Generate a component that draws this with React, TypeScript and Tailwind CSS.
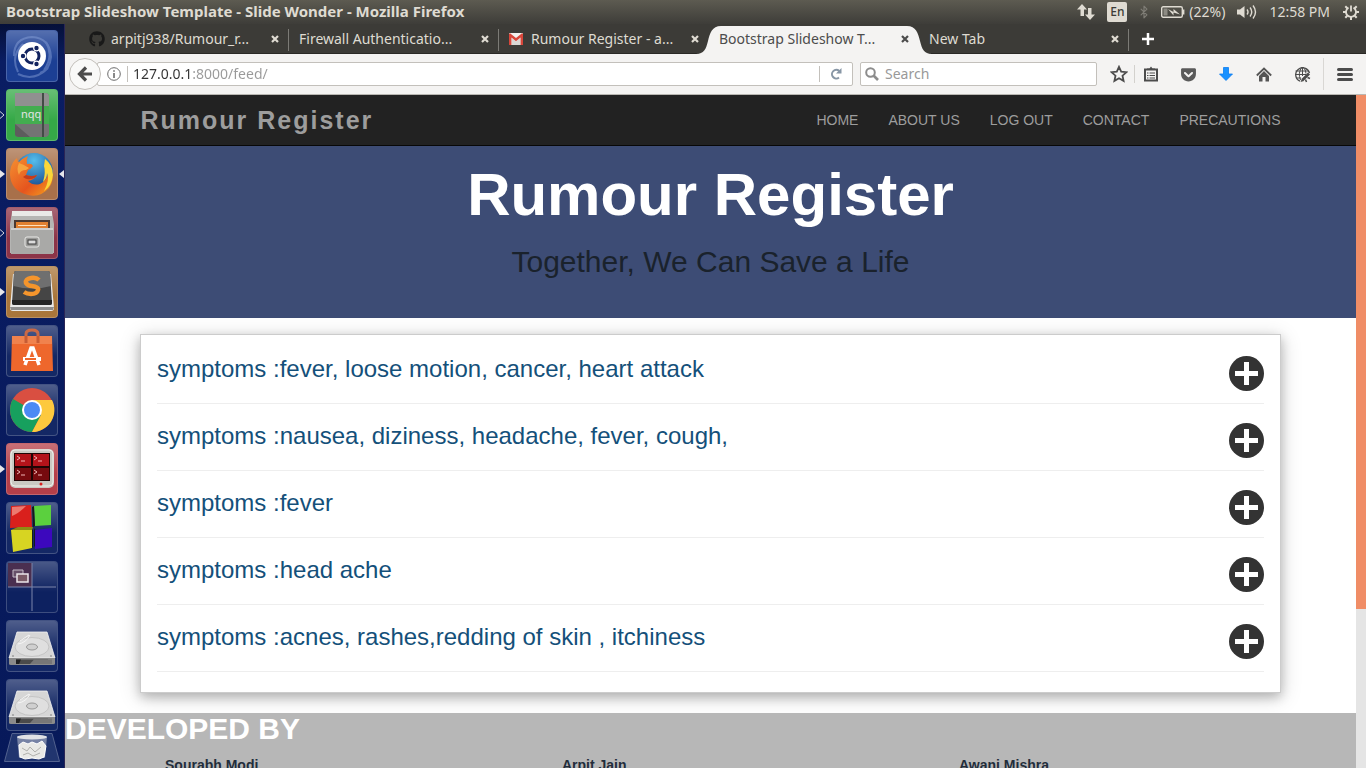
import type { ReactNode } from "react";
import { Bluetooth } from "lucide-react";
import { FaGetPocket, FaGithub } from "react-icons/fa";

const NAV_LINKS = ["Home", "About us", "Log out", "Contact", "Precautions"];

const SYMPTOMS = [
  "fever, loose motion, cancer, heart attack",
  "nausea, diziness, headache, fever, cough,",
  "fever",
  "head ache",
  "acnes, rashes,redding of skin , itchiness",
];

const DEVELOPERS = ["Sourabh Modi", "Arpit Jain", "Awani Mishra"];

// share of the page that fits in the viewport
const VISIBLE_SHARE = 673 / 881;

const GmailIcon = () => (
  <svg viewBox="0 0 14 12" className="mr-0.5 h-3 w-3.5 shrink-0">
    <rect width="14" height="12" rx="1" fill="#f2f0ee" />
    <path d="M2.5 12V5L7 8.5 11.5 5v7z" fill="#d9d7d4" />
    <path d="M0 12V1l1-.8L7 5l6-4.8 1 .8v11h-2.4V4.6L7 8.2 2.4 4.600V12z" fill="#d9463a" />
  </svg>
);

const CloseIcon = () => (
  <svg viewBox="0 0 8 8" className="size-2">
    <path d="M1 1l6 6M7 1L1 7" stroke="currentColor" strokeWidth="2.2" fill="none" />
  </svg>
);

type TabInfo = { title: string; icon?: ReactNode; active?: boolean; divider?: boolean };

const TABS: TabInfo[] = [
  {
    title: "arpitj938/Rumour_r...",
    icon: <FaGithub className="size-4 shrink-0 text-[#191919]" />,
    divider: true,
  },
  { title: "Firewall Authenticatio...", divider: true },
  { title: "Rumour Register - a...", icon: <GmailIcon /> },
  { title: "Bootstrap Slideshow T...", active: true },
  { title: "New Tab", divider: true },
];

function Tab({ title, icon, active, divider }: TabInfo) {
  return (
    <div
      className={
        active
          ? "relative z-10 flex h-full w-[210px] items-center gap-1.5 px-2.5 text-[#4c4c4c]"
          : "relative flex h-full w-[210px] items-center gap-1.5 px-2.5 text-[#dfdbd2]"
      }
    >
      {active && (
        <svg viewBox="0 0 236 28" className="absolute -left-[13px] top-0.5 -z-10 h-7 w-[236px]">
          <path
            d="M0 28C8 28 10 23 12 15S16 0 25 0H211C220 0 222 7 224 15S228 28 236 28z"
            fill="#f4f3f2"
          />
        </svg>
      )}
      {icon}
      <button className="flex-1 overflow-hidden text-left whitespace-nowrap">{title}</button>
      <button aria-label="Close tab">
        <CloseIcon />
      </button>
      {divider && <span className="absolute right-0 top-[5px] h-[22px] w-px bg-[#7c7b76]" />}
    </div>
  );
}

function TitleBar() {
  return (
    <header className="flex h-6 shrink-0 items-center justify-between bg-linear-to-b from-[#5d5b51] to-[#3e3d39] px-1.5 text-sm text-[#dfdbd2]">
      <h1 className="text-[15px] font-bold">
        Bootstrap Slideshow Template - Slide Wonder - Mozilla Firefox
      </h1>
      <div className="flex items-center">
        <svg viewBox="0 0 18 16" className="mr-3 h-4 w-[18px]" fill="currentColor">
          <path d="M5 0l5 5.500H7V12H3.500V5.500H0zM13 16l-5-5.500h3V4h3.500v6.500H18z" />
        </svg>
        <span className="mr-2.5 flex size-5 items-center justify-center rounded-xs bg-[#dfdbd2] text-xs font-medium text-[#3c3b37]">
          En
        </span>
        <Bluetooth className="mr-2.5 h-4 w-3.5 text-[#7f7d76]" />
        <svg viewBox="0 0 24 12" className="mr-1 h-3 w-6" fill="none" stroke="currentColor">
          <rect x=".7" y=".7" width="20.600" height="10.600" rx="1.500" strokeWidth="1.400" />
          <path d="M22.500 3.500v5" strokeWidth="1.800" />
          <rect x="2.500" y="2.500" width="4" height="7" fill="#8d8b83" stroke="none" />
          <path d="M7 3l5.500 3V3l6.500 5.500-6.500-2V9.500z" fill="currentColor" stroke="none" />
        </svg>
        <span className="mr-3">(22%)</span>
        <svg viewBox="0 0 20 16" className="mr-3 h-4 w-5" fill="none" stroke="currentColor">
          <path d="M0 5.500h3L7.500 2v12L3 10.500H0z" fill="currentColor" stroke="none" />
          <path d="M10 5.500q2 2.500 0 5M13 3.500q3.500 4.500 0 9M16 1.500q5 6.500 0 13" strokeWidth="1.400" />
        </svg>
        <span className="mr-3">12:58 PM</span>
        <svg viewBox="0 0 18 18" className="size-[18px]" fill="none" stroke="currentColor">
          <path d="M6.500 4.600a5 5 0 1 0 5 0M9 2.500v6" strokeWidth="1.800" />
          <path
            d="M9 14v3M1 9h3M14 9h3M3.300 3.300l2 2M14.700 3.300l-2 2M3.300 14.700l2-2M14.700 14.700l-2-2"
            strokeWidth="2"
          />
        </svg>
      </div>
    </header>
  );
}

function Tile({
  label,
  color,
  marker,
  active,
  children,
}: {
  label: string;
  color: string;
  marker?: "solid" | "hollow";
  active?: boolean;
  children: ReactNode;
}) {
  return (
    <li className="relative px-1.5">
      {marker && (
        <svg viewBox="0 0 5 8" className="absolute left-0 top-[22px] h-2 w-[5px]">
          {marker === "solid" ? (
            <path d="M0 0l5 4-5 4z" fill="#e6e6ea" />
          ) : (
            <path d="M0 .5L4 4 0 7.500" fill="none" stroke="#d6d6de" />
          )}
        </svg>
      )}
      <button
        aria-label={label}
        className={`block size-[52px] rounded-[4px] border border-white/20 ${color}`}
      >
        <span className="block size-full rounded-[3px] bg-linear-to-b from-white/25 to-transparent to-60%">
          <svg viewBox="1 1 50 50" className="size-full">
            {children}
          </svg>
        </span>
      </button>
      {active && (
        <svg viewBox="0 0 5 8" className="absolute right-0 top-[22px] h-2 w-[5px]">
          <path d="M5 0L0 4l5 4z" fill="#e6e6ea" />
        </svg>
      )}
    </li>
  );
}

const Drive = () => (
  <>
    <path d="M11 12H41L49 38H3z" fill="#d6d6d6" stroke="#f3f3f3" strokeWidth=".8" />
    <path d="M3 38H49V44Q49 45 47 45H5Q3 45 3 44z" fill="#8b8b8b" />
    <path d="M10 39.500H42V44H10z" fill="#4b4b4b" />
    <path d="M10 39.500h5L13 44h-3z" fill="#1f1f1f" />
    <path d="M28 39.500H46V44H24z" fill="#777" />
    <ellipse cx="26" cy="27" rx="17" ry="9.500" fill="#dfdfdf" stroke="#c4c4c4" />
    <path d="M12 24Q20 23 24 15M14 21l9-6" stroke="#f5f5f5" fill="none" />
    <ellipse cx="26" cy="27" rx="5.500" ry="3" fill="#cfcfcf" stroke="#999" />
    <circle cx="7" cy="36" r=".8" fill="#777" />
    <circle cx="45" cy="36" r=".8" fill="#777" />
  </>
);

function Launcher() {
  return (
    <nav
      aria-label="Launcher"
      className="w-[65px] shrink-0 overflow-hidden border-r border-[#2a2556] bg-linear-to-b from-[#051039] via-[#0a1d63] via-5% to-[#07195a] pt-1.5"
    >
      <ul className="flex flex-col gap-[7px]">
        <Tile label="Dash" color="bg-[#1c3f94]">
          <g fill="none" stroke="#8ea6dc" strokeWidth="2" opacity=".45">
            <path d="M8 26Q8 8 26 7Q44 8 45 27Q44 40 34 43" />
            <path d="M12 42Q4 26 17 14M40 12Q48 26 38 40M12 44Q28 52 42 38" />
          </g>
          <circle cx="26" cy="26" r="14" fill="#fff" />
          <circle cx="26" cy="26" r="7" fill="none" stroke="#12235f" strokeWidth="3" />
          <g stroke="#fff" strokeWidth="1.200" fill="#12235f">
            <circle cx="17" cy="26" r="2.800" />
            <circle cx="30.500" cy="18" r="2.800" />
            <circle cx="30.500" cy="34" r="2.800" />
          </g>
        </Tile>
        <Tile label="nqq" color="bg-[#35a947]" marker="hollow">
          <rect x="9" y="4" width="34" height="44" rx="4" fill="#747474" />
          <path d="M9 4H39Q43 4 43 8V17H9z" fill="#909090" />
          <path d="M9 17H43V35H9z" fill="#43ad50" />
          <path d="M9 35L24 48H13Q9 48 9 45z" fill="#5d5d5d" />
          <path d="M36 4h2v44h-2z" fill="#424b45" />
          <text x="15" y="29" fontSize="11" fontFamily="Noto Sans, sans-serif" fill="#e5e5e5">
            nqq
          </text>
        </Tile>
        <Tile label="Firefox" color="bg-[#a8704a]" marker="solid" active>
          <defs>
            <radialGradient id="globe" cx="50%" cy="20%" r="80%">
              <stop offset="0" stopColor="#55bdec" />
              <stop offset="1" stopColor="#123f86" />
            </radialGradient>
            <linearGradient id="fox" x1="0" y1="0" x2="1" y2="1">
              <stop offset="0" stopColor="#f59232" />
              <stop offset=".6" stopColor="#e5551e" />
              <stop offset="1" stopColor="#f6a51f" />
            </linearGradient>
          </defs>
          <circle cx="28" cy="24" r="19" fill="url(#globe)" />
          <path
            d="M5 19Q7 13 11 10Q11 13 13 14Q17 10 22 8Q20 12 21 16Q26 15 27 18Q25 21 22 22L20 27Q26 29 31 27Q28 32 22 33Q27 38 34 36Q41 33 44 21Q50 30 43 40Q34 50 22 47Q5 43 4 27Q4 22 5 19z"
            fill="url(#fox)"
          />
          <path d="M39 11Q47 17 47 27Q46 38 38 43Q44 32 41 25Q41 31 37 34Q40 24 38 18z" fill="#fbd638" />
          <path d="M13 15Q10 21 13 27Q14 22 20 22L23 20Q19 17 13 15z" fill="#f7a53e" />
          <path d="M20 27Q26 29 31 27Q29 31 24 31Q21 32 17 29z" fill="#c43c1c" />
        </Tile>
        <Tile label="Files" color="bg-[#8c3448]" marker="hollow">
          <path d="M6 5H46L48 17V46H4V17z" fill="#b5b5b3" />
          <path d="M6 4H46V9H6z" fill="#e9e9e7" />
          <path d="M8 13H44V22H8z" fill="#4b3a32" />
          <path d="M10 15H42V22H10z" fill="#e18131" />
          <path d="M12 18H40V19H12z" fill="#ffe1bd" />
          <path d="M5 21H47V47H5z" fill="#a9a9a7" />
          <path d="M5 21H47V23H5z" fill="#cfcfcd" />
          <rect x="19" y="30" width="14" height="10" rx="2" fill="#9b9b99" stroke="#e9e9e7" />
          <rect x="22" y="33" width="8" height="4" fill="#dcdcdc" stroke="#3b3b3b" />
        </Tile>
        <Tile label="Sublime Text" color="bg-[#a9763b]" marker="solid">
          <path d="M7 8L4 42Q4 45 7 45H45Q48 45 48 42L45 8z" fill="#e9e9e9" />
          <path d="M4 41H48L47 44H5z" fill="#8d8d8d" />
          <path d="M10 5H42Q44 5 44 7L46 37Q46 39 44 39H8Q6 39 6 37L8 7Q8 5 10 5z" fill="#454545" />
          <path d="M10 5H42Q44 5 44 7L45 20Q26 25 7.500 20L8 7Q8 5 10 5z" fill="#6f6f6f" />
          <path d="M6 34H46V37Q46 39 44 39H8Q6 39 6 37z" fill="#242424" />
          <path
            d="M33 14Q30 11 25 12Q19 13 20 17Q22 20 26 20Q33 21 32 24Q31 28 25 28Q21 28 18 26"
            fill="none"
            stroke="#f5952c"
            strokeWidth="4.500"
          />
        </Tile>
        <Tile label="Software Center" color="bg-[#142865]">
          <path d="M20 18V9Q20 5 26 5T32 9V18" fill="none" stroke="#cb6945" strokeWidth="3" />
          <path d="M6 11H46L47 46H5z" fill="#ee672c" />
          <path d="M6 11H46V19H6z" fill="#f0824d" />
          <path d="M20 18V11M32 18V11" stroke="#c65c35" strokeWidth="3" />
          <path d="M19 40L25 23H27L33 40" fill="none" stroke="#fff" strokeWidth="3.500" />
          <path d="M17 32H35V36H17z" fill="#fff" />
          <path d="M19 33H30V35H19z" fill="#ee672c" />
        </Tile>
        <Tile label="Chrome" color="bg-[#142865]">
          <circle cx="26" cy="26" r="22" fill="#d94f41" />
          <path d="M26 26L7 15A22 22 0 0 0 26 48L35 31z" fill="#17a05e" />
          <path d="M26 16H46A22 22 0 0 1 26 48L35 31z" fill="#fdc93e" />
          <circle cx="26" cy="26" r="10" fill="#fff" />
          <circle cx="26" cy="26" r="8" fill="#4b8af4" />
        </Tile>
        <Tile label="Terminator" color="bg-[#b53f49]" marker="solid">
          <rect x="4" y="6" width="44" height="39" rx="5" fill="#c9c9c2" />
          <rect x="5" y="7" width="42" height="36" rx="4" fill="none" stroke="#eeeee9" />
          <path d="M8 10H44V38H8z" fill="#1f0505" />
          <path d="M9 11H25V23H9zM27 11H43V23H27z" fill="#b3131a" />
          <path d="M9 25H25V37H9zM27 25H43V37H27z" fill="#760a0e" />
          <path
            d="M11 13l3 2-3 2M15 18h4M28 13l3 2-3 2M32 18h4M11 27l3 2-3 2M15 32h4M28 27l3 2-3 2M32 32h4"
            fill="none"
            stroke="#f0b4b4"
          />
          <circle cx="35" cy="41" r="1.500" fill="#d82020" />
        </Tile>
        <Tile label="Code::Blocks" color="bg-[#142865]">
          <path d="M5 4L25 3L26 25L4 26z" fill="#d9201c" />
          <path d="M6 5L20 4Q12 12 6 14z" fill="#ec7a70" />
          <path d="M28 4L45 3V23L29 24z" fill="#5bd03e" />
          <path d="M26 5l2-1 1 20-2 1zM25 27l2 1v17l-2 2zM28 26l2 3-1 16-1-1z" fill="#141a1c" />
          <path d="M5 28L26 27V46L7 50z" fill="#d7d422" />
          <path d="M5 28L12 25L27 25L26 28z" fill="#8f8c12" />
          <path d="M29 28L46 26V45L29 47z" fill="#3c08bd" />
        </Tile>
        <Tile label="Workspaces" color="bg-[#0d2160]">
          <path d="M2 2H26V26H2z" fill="#4a2f50" />
          <path d="M26 2V50M2 26H50" stroke="#7c86ab" />
          <path d="M7 9H17V16H7z" fill="#675069" stroke="#c5bcc8" />
          <path d="M11 13H22V21H11z" fill="#7a5a66" stroke="#ece6ea" strokeWidth="1.500" />
        </Tile>
        <Tile label="Disk one" color="bg-[#142865]">
          <Drive />
        </Tile>
        <Tile label="Disk two" color="bg-[#142865]">
          <Drive />
        </Tile>
      </ul>
      <button aria-label="Trash" className="mx-1 mt-0.5 block">
        <svg viewBox="0 0 56 29" className="h-[29px] w-14">
          <path d="M8 .5H48L55.500 28.500H.5z" fill="#21356f" stroke="#53628f" />
          <path d="M13 4L15 25H41L43 4z" fill="#7783a5" />
          <ellipse cx="28" cy="4" rx="15" ry="2.500" fill="#e1e2e6" />
          <path
            d="M15 12l4-3 5 2 4-2 5 2 5-3 4 5-2 11-5 2-7-1-7 1-5-2z"
            fill="#e9e9e6"
            stroke="#fff"
          />
          <path d="M18 15l5 3 3-4 5 5 6-5M19 22l5-2 5 3 7-3" fill="none" stroke="#b1b1ad" />
        </svg>
      </button>
    </nav>
  );
}

function ToolbarButton({ label, children }: { label: string; children: ReactNode }) {
  return (
    <button aria-label={label} className="flex h-8 w-[38px] items-center justify-center">
      {children}
    </button>
  );
}

function Toolbar() {
  return (
    <div className="flex h-[41px] shrink-0 items-center border-b border-[#b9b7b2] bg-[#f4f3f2] text-sm text-[#4c4c4c]">
      <button
        aria-label="Back"
        className="z-10 ml-1 flex size-8 shrink-0 items-center justify-center rounded-full border border-[#c3c0bb] bg-[#f9f9f8]"
      >
        <svg viewBox="0 0 16 16" className="size-4">
          <path d="M9 1.500L2.500 8 9 14.500M3 8h12" fill="none" stroke="#4c4c4c" strokeWidth="3.200" />
        </svg>
      </button>
      <div className="-ml-1 flex h-6 flex-1 items-center rounded-xs border border-[#c3c0bb] bg-white pl-[9px]">
        <svg viewBox="0 0 14 14" className="size-3.5 shrink-0" fill="none" stroke="#6b6b6b">
          <circle cx="7" cy="7" r="6.300" />
          <path d="M7 6v5M7 3.200v1.600" strokeWidth="1.600" />
        </svg>
        <span className="mr-[5px] ml-1.5 h-4 w-px shrink-0 bg-[#c3c0bb]" />
        <input
          aria-label="Address"
          defaultValue="127.0.0.1:8000/feed/"
          className="min-w-0 flex-1 bg-[linear-gradient(to_right,#333_60px,#999_60px)] bg-clip-text text-transparent outline-none"
        />
        <button
          aria-label="Reload"
          className="flex h-4 w-[33px] items-center justify-center border-l border-[#c3c0bb]"
        >
          <svg viewBox="0 0 12 12" className="size-3">
            <path d="M9 9.500A4.300 4.300 0 1 1 9.200 3" fill="none" stroke="#8796a5" strokeWidth="2" />
            <path d="M11.500 0v5.500H6z" fill="#8796a5" />
          </svg>
        </button>
      </div>
      <label className="ml-[7px] flex h-6 w-[237px] items-center gap-1.5 rounded-xs border border-[#c3c0bb] bg-white px-1">
        <svg viewBox="0 0 14 14" className="size-3.5 shrink-0" fill="none" stroke="#8c8c8c">
          <circle cx="5.500" cy="5.500" r="4.300" strokeWidth="2" />
          <path d="M8.500 8.500l4.500 4.500" strokeWidth="2.600" />
        </svg>
        <input
          aria-label="Search"
          placeholder="Search"
          className="min-w-0 flex-1 outline-none placeholder:text-[#999]"
        />
      </label>
      <ToolbarButton label="Bookmark this page">
        <svg viewBox="0 0 18 18" className="ml-1.5 size-[18px]">
          <path
            d="M9 1.800l2.200 4.800 5.200.6-3.900 3.500 1.100 5.200L9 13.300l-4.600 2.600 1.100-5.200L1.600 7.200l5.200-.6z"
            fill="none"
            stroke="#4c4c4c"
            strokeWidth="1.800"
          />
        </svg>
      </ToolbarButton>
      <span className="-ml-px h-[18px] w-px bg-[#d3d1cd]" />
      <button aria-label="Bookmarks" className="mr-0.5 flex h-8 w-8 items-center justify-center">
        <svg viewBox="0 0 14 16" className="h-4 w-3.5">
          <path d="M1 3.500h12v11H1z" fill="#f4f3f2" stroke="#4c4c4c" strokeWidth="2" />
          <path d="M3 4V2.500h2.500L7 .5l1.500 2H11V4z" fill="#4c4c4c" />
          <path d="M3 7h1.500M5.500 7H11M3 9.500h1.500M5.500 9.500H11M3 12h1.500M5.500 12H11" stroke="#4c4c4c" />
        </svg>
      </button>
      <ToolbarButton label="Pocket">
        <FaGetPocket className="size-[17px] text-[#5a5a5a]" />
      </ToolbarButton>
      <ToolbarButton label="Downloads">
        <svg viewBox="0 0 14 14" className="size-3.5">
          <path d="M4.500.5h5V7h4L7 13.500.5 7h4z" fill="#1991ff" stroke="#0a7cf0" strokeWidth=".8" />
        </svg>
      </ToolbarButton>
      <ToolbarButton label="Home">
        <svg viewBox="0 0 16 15" className="h-[15px] w-4">
          <path d="M.8 8.500L8 1.500l7.200 7" fill="none" stroke="#555" strokeWidth="1.800" />
          <path d="M8 4l5 5v5.500H9.500V10h-3v4.500H3V9z" fill="#555" />
        </svg>
      </ToolbarButton>
      <ToolbarButton label="Web developer">
        <svg viewBox="0 0 17 17" className="size-[17px]" fill="none" stroke="#4c4c4c">
          <path d="M15.500 7A7 7 0 1 0 6 15.200" strokeWidth="1.300" />
          <path d="M8 1Q3.500 7 6.500 14M9 1Q12 4 12 7.500M8.500 1v9M1.500 5h13M1 8.500h11M2 12h5" />
          <path d="M15 7.500L8.500 14" strokeWidth="2.800" />
          <path d="M8 12.500L6.500 16l3.500-1z" fill="#4c4c4c" stroke="none" />
          <path d="M13.500 11.500l2.500 1M11.500 13.500l1 2.500" strokeWidth="1.500" />
        </svg>
      </ToolbarButton>
      <span className="ml-0.5 h-8 w-px bg-[#d9d7d4]" />
      <button aria-label="Menu" className="flex h-8 w-[42px] items-center justify-center">
        <svg viewBox="0 0 16 13" className="h-[13px] w-4">
          <path d="M1.500 1.500h13M1.500 6.500h13M1.500 11.500h13" stroke="#4c4c4c" strokeWidth="3" strokeLinecap="round" />
        </svg>
      </button>
    </div>
  );
}

function FeedPage() {
  return (
    <main className="min-w-0 flex-1 overflow-hidden bg-white font-['Liberation_Sans',Arial,sans-serif] text-sm">
      <nav className="border-b border-[#080808] bg-[#222]">
        <div className="mx-auto flex h-[50px] max-w-[1140px] items-center justify-between">
          <a href="#home" className="pt-0.5 text-[25px] font-bold tracking-[2px] text-[#9d9d9d]">
            Rumour Register
          </a>
          <ul className="flex gap-[30px]">
            {NAV_LINKS.map((link) => (
              <li key={link}>
                <a href={`#${link}`} className="text-[#9d9d9d] uppercase">
                  {link}
                </a>
              </li>
            ))}
          </ul>
        </div>
      </nav>

      <section className="bg-[#3d4c75] pt-4 pb-[39px] text-center">
        <h2 className="text-6xl/[66px] font-bold text-white">Rumour Register</h2>
        <p className="mt-[17px] text-3xl/[34px] text-[#1a222c]">Together, We Can Save a Life</p>
      </section>

      <section className="mx-auto mt-4 mb-5 max-w-[1141px] border border-[#ccc] px-4 pt-0.5 pb-5 shadow-[0_4px_10px_rgba(0,0,0,0.2),0_4px_20px_rgba(0,0,0,0.19)]">
        {SYMPTOMS.map((symptom) => (
          <div
            key={symptom}
            className="flex items-start justify-between border-b border-[#eee] pt-[19px] pb-3"
          >
            <h3 className="text-2xl/[26px] text-[#14507a]">symptoms :{symptom}</h3>
            <button aria-label="Show details">
              <svg viewBox="0 0 35 35" className="size-[35px]">
                <circle cx="17.500" cy="17.500" r="17.500" fill="#333" />
                <path d="M17.500 6v23M6 17.500h23" stroke="#fff" strokeWidth="5" />
              </svg>
            </button>
          </div>
        ))}
      </section>

      <footer className="bg-[#b7b7b7] pb-10">
        <h2 className="text-3xl/8 font-bold text-white">DEVELOPED BY</h2>
        <div className="mt-2.5 grid grid-cols-3 pl-[100px]">
          {DEVELOPERS.map((name) => (
            <strong key={name} className="text-sm/5 text-[#222d3b]">
              {name}
            </strong>
          ))}
        </div>
      </footer>
    </main>
  );
}

export default function App() {
  return (
    <div className="flex h-screen flex-col overflow-hidden font-['Noto_Sans',sans-serif]">
      <TitleBar />
      <div className="flex min-h-0 flex-1">
        <Launcher />
        <div className="flex min-w-0 flex-1 flex-col">
          <div className="flex h-[30px] shrink-0 items-center border-b border-[#2a2926] bg-[#3c3b37] pl-3.5 text-sm">
            {TABS.map((tab) => (
              <Tab key={tab.title} {...tab} />
            ))}
            <button aria-label="New tab" className="ml-3 text-white">
              <svg viewBox="0 0 14 14" className="size-3.5">
                <path d="M7 1v12M1 7h12" stroke="currentColor" strokeWidth="2.500" />
              </svg>
            </button>
          </div>
          <Toolbar />
          <div className="flex min-h-0 flex-1">
            <FeedPage />
            <div className="w-2.5 shrink-0 bg-[#e5e5e5]">
              <div className="bg-[#f08d66]" style={{ height: `${VISIBLE_SHARE * 100}%` }} />
            </div>
          </div>
        </div>
      </div>
    </div>
  );
}
